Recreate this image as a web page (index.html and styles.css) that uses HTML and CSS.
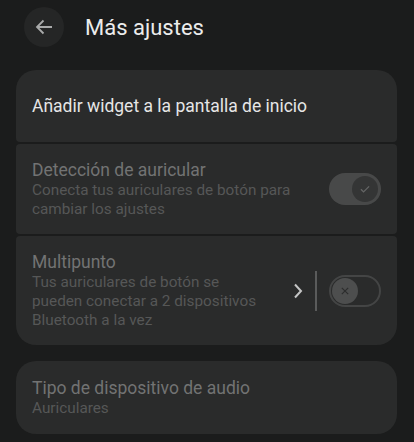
FILE: index.html
```html
<!DOCTYPE html>
<html lang="es">
<head>
    <meta charset="UTF-8">
    <meta name="viewport" content="width=device-width, initial-scale=1.0">
    <title>Más ajustes</title>
    <link rel="stylesheet" href="styles.css">
</head>
<body>
    <div class="header">
        <button class="back" aria-label="Atrás">
            <svg width="18" height="16" viewBox="0 0 18 16">
                <path d="M17 8H2M8.5 1.5L2 8l6.5 6.5" fill="none" stroke="currentColor" stroke-width="1.8"/>
            </svg>
        </button>
        <h1 class="title">Más ajustes</h1>
    </div>

    <div class="group">
        <div class="item item-first">
            <div class="text">
                <div class="label">Añadir widget a la pantalla de inicio</div>
            </div>
        </div>

        <div class="item disabled">
            <div class="text">
                <div class="label">Detección de auricular</div>
                <div class="summary">Conecta tus auriculares de botón para cambiar los ajustes</div>
            </div>
            <div class="switch on">
                <div class="thumb">
                    <svg width="14" height="14" viewBox="0 0 24 24">
                        <path d="M5 12.5l4.5 4.5L19 7.5" fill="none" stroke="currentColor" stroke-width="2.2"/>
                    </svg>
                </div>
            </div>
        </div>

        <div class="item item-last disabled">
            <div class="text narrow">
                <div class="label">Multipunto</div>
                <div class="summary">Tus auriculares de botón se pueden conectar a 2 dispositivos Bluetooth a la vez</div>
            </div>
            <svg class="chevron" width="10" height="16" viewBox="0 0 10 16">
                <path d="M2 1.5l6 6.5-6 6.5" fill="none" stroke="currentColor" stroke-width="2"/>
            </svg>
            <div class="divider"></div>
            <div class="switch off">
                <div class="thumb">
                    <svg width="14" height="14" viewBox="0 0 24 24">
                        <path d="M6.5 6.5l11 11M17.5 6.5l-11 11" fill="none" stroke="currentColor" stroke-width="2"/>
                    </svg>
                </div>
            </div>
        </div>
    </div>

    <div class="group">
        <div class="item item-single disabled">
            <div class="text">
                <div class="label">Tipo de dispositivo de audio</div>
                <div class="summary">Auriculares</div>
            </div>
        </div>
    </div>
</body>
</html>
```

FILE: styles.css
```css
body {
    margin: 0;
    background-color: #1b1c1c;
    font-family: Roboto, "Noto Sans", sans-serif;
    color: #e6e6e6;
}

.header {
    display: flex;
    align-items: center;
    height: 54px;
    padding: 0 0 0 24px;
}

.back {
    display: flex;
    align-items: center;
    justify-content: center;
    width: 40px;
    height: 40px;
    border: none;
    border-radius: 50%;
    padding: 0;
    background-color: #252626;
    color: #a9aaaa;
}

.title {
    margin: 0 0 0 21px;
    font-size: 22px;
    font-weight: 400;
    color: #ececec;
}

.group {
    display: flex;
    flex-direction: column;
    gap: 2px;
    margin: 16px 17px 0 16px;
}

.item {
    display: flex;
    align-items: center;
    padding: 15px 16px;
    border-radius: 4px;
    background-color: #2a2b2b;
}

.item-first {
    border-radius: 20px 20px 4px 4px;
    padding: 25px 16px;
}

.item-last {
    border-radius: 4px 4px 20px 20px;
}

.item-single {
    border-radius: 20px;
    padding: 16px 16px;
}

.text {
    flex: 1;
}

.text.narrow {
    flex: 0 1 232px;
    margin-right: auto;
}

.label {
    font-size: 17.5px;
    line-height: 22px;
}

.summary {
    font-size: 15.3px;
    line-height: 19px;
}

.disabled .label {
    color: #727373;
}

.disabled .summary {
    color: #565757;
}

.switch {
    display: flex;
    align-items: center;
    box-sizing: border-box;
    width: 52px;
    height: 32px;
    border-radius: 16px;
    padding: 0 3px;
}

.switch.on {
    justify-content: flex-end;
    background-color: #484949;
}

.switch.off {
    border: 2px solid #444545;
    padding: 0 1px;
}

.thumb {
    display: flex;
    align-items: center;
    justify-content: center;
    width: 26px;
    height: 26px;
    border-radius: 50%;
}

.on .thumb {
    background-color: #343535;
    color: #646565;
}

.off .thumb {
    background-color: #4d4e4e;
    color: #2c2d2d;
}

.chevron {
    color: #c4c5c5;
}

.divider {
    width: 2px;
    height: 40px;
    margin: 0 12px 0 12px;
    background-color: #5a5b5b;
}
```
